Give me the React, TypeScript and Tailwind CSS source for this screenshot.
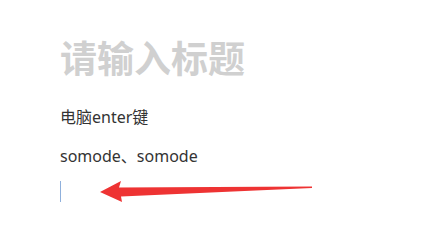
export default function App() {
  return (
    <div className="relative h-[252px] w-[429px] bg-white pl-[60px] pt-[33px] font-['Noto_Sans','Noto_Sans_CJK_SC',sans-serif]">
      <h1 className="font-['Noto_Sans_CJK_SC',sans-serif] text-[37px] font-bold leading-[48px] text-[#d0d0d0]">请输入标题</h1>
      <p className="mt-[24px] text-[16px] leading-[24px] text-[#333]">电脑enter键</p>
      <p className="mt-[15px] text-[16px] leading-[24px] text-[#333]">somode、somode</p>
      <div className="mt-[13px] h-[21px] w-px bg-[#8fb0dc]" />
      <svg className="absolute left-0 top-0" width="429" height="252" viewBox="0 0 429 252">
        <polygon
          points="100,192 121,181 119,187.5 312,186.5 312,188 121,196.5 122,202"
          fill="#ee3333"
        />
      </svg>
    </div>
  );
}
